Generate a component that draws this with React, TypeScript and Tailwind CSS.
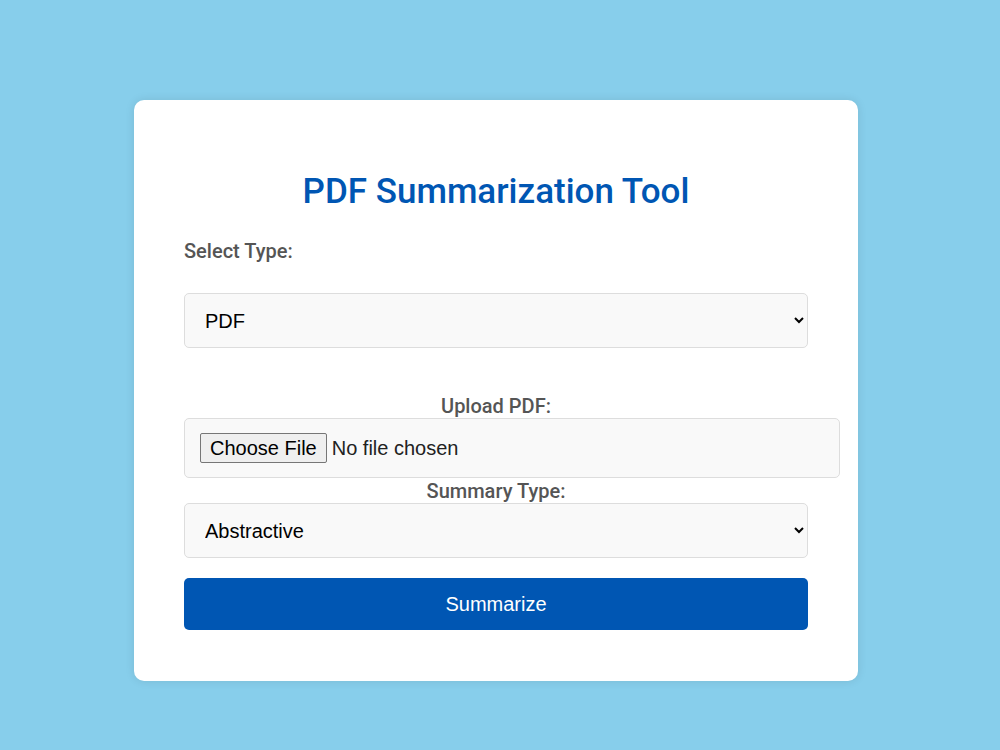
import { useState } from "react";

export default function App() {
  const [type, setType] = useState("pdf");
  const [summary, setSummary] = useState("abstractive");

  const labelCls =
    "block text-[20px] leading-[24px] font-medium text-[#555555] font-['Roboto',sans-serif]";
  const selectCls =
    "w-full h-[55px] px-[16px] text-[20px] text-black bg-[#f9f9f9] border border-[#dddddd] rounded-[5px] font-['Liberation_Sans',Arial,sans-serif] outline-none";

  return (
    <div className="min-h-[750px] w-full bg-[#87ceeb] flex justify-center pt-[100px] pr-[8px]">
      <div className="w-[724px] h-[581px] bg-white rounded-[10px] shadow-[0_0_10px_rgba(0,0,0,0.1)] px-[50px] pt-[50px] flex flex-col">
        <h1 className="mt-[22px] text-center text-[35px] leading-[40px] font-medium text-[#0056b3] font-['Roboto',sans-serif]">
          PDF Summarization Tool
        </h1>

        <label className={`${labelCls} mt-[27px]`}>Select Type:</label>
        <select
          className={`${selectCls} mt-[30px]`}
          value={type}
          onChange={(e) => setType(e.target.value)}
        >
          <option value="pdf">PDF</option>
          <option value="text">Text</option>
        </select>

        <label className={`${labelCls} text-center mt-[46px]`}>Upload PDF:</label>
        <input
          type="file"
          accept="application/pdf"
          className="w-[656px] py-[14px] px-[15px] bg-[#f9f9f9] border border-[#dddddd] rounded-[5px] text-[20px] leading-[24px] text-[#222] font-['Liberation_Sans',Arial,sans-serif] file:h-[30px] file:px-[9px] file:mr-[5px] file:bg-[#efefef] file:border file:border-[#767676] file:rounded-[2px] file:text-black"
        />

        <label className={`${labelCls} text-center mt-px`}>Summary Type:</label>
        <select
          className={`${selectCls} mt-0`}
          value={summary}
          onChange={(e) => setSummary(e.target.value)}
        >
          <option value="abstractive">Abstractive</option>
          <option value="extractive">Extractive</option>
        </select>

        <button className="mt-[20px] w-full h-[52px] bg-[#0056b3] text-white text-[20px] rounded-[5px] font-['Liberation_Sans',Arial,sans-serif]">
          Summarize
        </button>
      </div>
    </div>
  );
}
